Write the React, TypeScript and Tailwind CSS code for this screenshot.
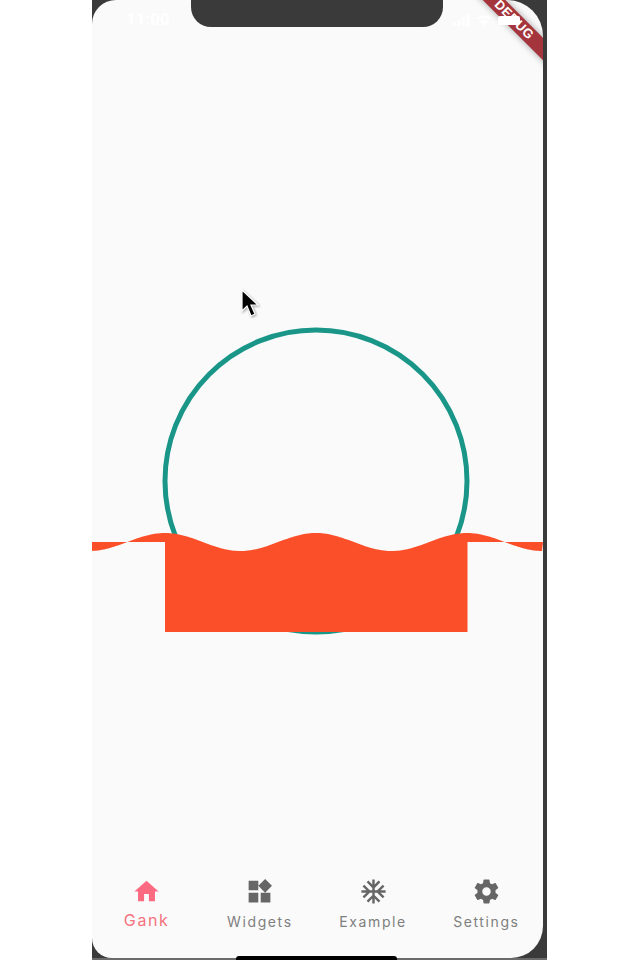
const navItems = [
  {
    label: 'Gank',
    active: true,
    d: 'M10 20v-6h4v6h5v-8h3L12 3 2 12h3v8z',
  },
  {
    label: 'Widgets',
    active: false,
    d: 'M13 13v8h8v-8h-8zM3 21h8v-8H3v8zM3 3v8h8V3H3zm13.66-1.31L11 7.34 16.66 13l5.66-5.66-5.66-5.65z',
  },
  {
    label: 'Example',
    active: false,
    d: 'M22 11h-4.17l3.24-3.24-1.41-1.42L15 11h-2V9l4.66-4.66-1.42-1.41L13 6.17V2h-2v4.17L7.76 2.93 6.34 4.34 11 9v2H9L4.34 6.34 2.93 7.76 6.17 11H2v2h4.17l-3.24 3.24 1.41 1.42L9 13h2v2l-4.66 4.66 1.42 1.41L11 17.83V22h2v-4.17l3.24 3.24 1.42-1.41L13 15v-2h2l4.66 4.66 1.41-1.42L17.83 13H22z',
  },
  {
    label: 'Settings',
    active: false,
    d: 'M19.43 12.98c.04-.32.07-.64.07-.98s-.03-.66-.07-.98l2.11-1.65c.19-.15.24-.42.12-.64l-2-3.46c-.12-.22-.39-.3-.61-.22l-2.49 1c-.52-.4-1.08-.73-1.69-.98l-.38-2.65C14.46 2.18 14.25 2 14 2h-4c-.25 0-.46.18-.49.42l-.38 2.65c-.61.25-1.17.59-1.69.98l-2.49-1c-.23-.09-.49 0-.61.22l-2 3.46c-.13.22-.07.49.12.64l2.11 1.65c-.04.32-.07.65-.07.98s.03.66.07.98l-2.11 1.65c-.19.15-.24.42-.12.64l2 3.46c.12.22.39.3.61.22l2.49-1c.52.4 1.08.73 1.69.98l.38 2.65c.03.24.24.42.49.42h4c.25 0 .46-.18.49-.42l.38-2.65c.61-.25 1.17-.59 1.69-.98l2.49 1c.23.09.49 0 .61-.22l2-3.46c.12-.22.07-.49-.12-.64l-2.11-1.65zM12 15.5c-1.93 0-3.5-1.57-3.5-3.5s1.57-3.5 3.5-3.5 3.5 1.57 3.5 3.5-1.57 3.5-3.5 3.5z',
  },
];

// wave crests sit at x = 165, 316, 467 in page coordinates
const buildWave = () => {
  let d = 'M92 542';
  for (let x = 92; x <= 543; x += 2) {
    const y = 542 - 9 * Math.cos((2 * Math.PI * (x - 316)) / 151);
    d += ` L${x} ${y.toFixed(2)}`;
  }
  return d + ' L543 542 L467.5 542 L467.5 632 L165 632 L165 542 Z';
};

const WaveCircle = () => (
  <svg width={451} height={320} viewBox="92 320 451 320" className="block">
    <circle cx={316} cy={481} r={151} fill="none" stroke="#1a9688" strokeWidth={5} />
    <path d={buildWave()} fill="#fb4f2a" />
  </svg>
);

const StatusBar = () => (
  <div className="relative z-10 flex h-[44px] shrink-0 items-start justify-between pl-[34px] pr-[23px] pt-[9px]">
    <span className="text-[17px] font-bold leading-5 text-white [font-family:Roboto,sans-serif]">11:00</span>
    <div className="flex items-center gap-[6px] pt-[5px]">
      <svg width={17} height={11} viewBox="0 0 17 11" fill="white">
        <rect x={0} y={7} width={3} height={4} />
        <rect x={4.5} y={5} width={3} height={6} />
        <rect x={9} y={2.5} width={3} height={8.5} />
        <rect x={13.5} y={0} width={3} height={11} />
      </svg>
      <svg width={16} height={12} viewBox="0 0 24 18" fill="white">
        <path d="M12 18l3.6-4.5a6 6 0 0 0-7.2 0zM1 6l2.2 2.7a14 14 0 0 1 17.6 0L23 6A18 18 0 0 0 1 6zM5 11l2.2 2.7a8 8 0 0 1 9.6 0L19 11a12 12 0 0 0-14 0z" />
      </svg>
      <div className="h-[9px] w-[22px] rounded-[2px] bg-white" />
    </div>
  </div>
);

const DebugBanner = () => (
  <div className="absolute left-[362px] top-[12px] flex h-4 w-[120px] rotate-45 items-center justify-center bg-[#a5353c] shadow-[0_0_7px_rgba(0,0,0,0.35)]">
    <span className="text-[13px] font-bold leading-4 tracking-[0.5px] text-white [font-family:'Liberation_Sans',sans-serif]">
      DEBUG
    </span>
  </div>
);

const BottomNav = () => (
  <nav className="-ml-[2px] mt-auto grid w-[453px] shrink-0 grid-cols-4 pb-[26px]">
    {navItems.map((item) => (
      <div key={item.label} className="flex flex-col items-center">
        <svg width={29} height={29} viewBox="0 0 24 24" fill={item.active ? '#fb6a80' : '#666666'}>
          <path d={item.d} />
        </svg>
        {item.active ? (
          <span className="mt-[4px] text-[16px] leading-5 tracking-[1.6px] text-[#f4727f] [font-family:Inter,sans-serif]">
            {item.label}
          </span>
        ) : (
          <span className="mt-[6px] text-[14px] leading-5 tracking-[1.6px] text-[#7f7f7f] [font-family:Inter,sans-serif]">
            {item.label}
          </span>
        )}
      </div>
    ))}
  </nav>
);

export default function App() {
  return (
    <div className="flex h-[960px] w-[640px] bg-white pl-[92px]">
      <div className="relative h-full w-[455px] overflow-hidden bg-[#3a3a3a]">
        <div className="relative flex h-[958px] w-[451px] flex-col overflow-hidden rounded-bl-[20px] rounded-br-[32px] rounded-tl-[24px] rounded-tr-[36px] bg-[#fafafa]">
          <StatusBar />
          <main className="pt-[276px]">
            <WaveCircle />
          </main>
          <BottomNav />
          <DebugBanner />
          <div className="absolute left-[99px] top-0 h-[27px] w-[252px] rounded-b-[20px] bg-[#3a3a3a]" />
          {/* mouse pointer caught in the recording */}
          <svg width={24} height={32} viewBox="0 0 24 32" className="absolute left-[146px] top-[287px]">
            <path d="M4 3v21l5-5 4 10 4-2-4-9h7z" fill="#000" stroke="#fff" strokeWidth={1.2} className="drop-shadow-[1px_1px_1px_rgba(0,0,0,0.35)]" />
          </svg>
        </div>
        <div className="h-[2px] w-full bg-[#6b6b6b]" />
        <div className="absolute bottom-0 left-[144px] h-[4px] w-[161px] rounded-t-[3px] bg-black" />
      </div>
    </div>
  );
}
